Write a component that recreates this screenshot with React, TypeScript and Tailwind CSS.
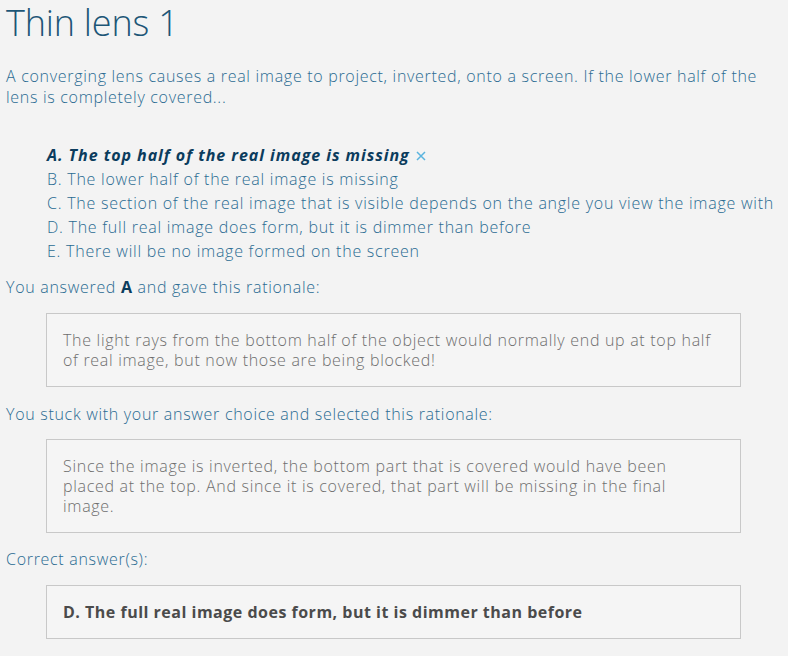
import React from "react";

const font = { fontFamily: '"Open Sans", "Noto Sans", sans-serif' };

export default function App() {
  const options = [
    "B. The lower half of the real image is missing",
    "C. The section of the real image that is visible depends on the angle you view the image with",
    "D. The full real image does form, but it is dimmer than before",
    "E. There will be no image formed on the screen",
  ];
  return (
    <div className="min-h-screen bg-[#f3f3f3] pl-[6px] pr-[6px] font-light text-[#2a6b92]" style={font}>
      <h1 className="text-[36px] leading-[46px] text-[#1d5677] font-light tracking-[-0.2px]">Thin lens 1</h1>
      <p className="mt-[20px] text-[16px] leading-[21px] tracking-[0.7px]">
        A converging lens causes a real image to project, inverted, onto a screen. If the lower half of the lens is completely covered...
      </p>
      <ul className="mt-[35px] ml-[41px] text-[16px] leading-[24px] tracking-[0.75px]">
        <li className="flex items-center">
          <span className="font-bold italic text-[#0b3c5d] tracking-[0.95px]">A. The top half of the real image is missing</span>
          <svg className="ml-[6px] mt-[2px]" width="10" height="10" viewBox="0 0 10 10" fill="none" stroke="#5ab4df" strokeWidth="1.5">
            <path d="M1 1 L9 9 M9 1 L1 9" />
          </svg>
        </li>
        {options.map((o) => (
          <li key={o} className="whitespace-nowrap">{o}</li>
        ))}
      </ul>
      <p className="mt-[12px] text-[16px] leading-[24px] tracking-[0.7px]">
        You answered <span className="font-bold text-[#0b3c5d]">A</span> and gave this rationale:
      </p>
      <div className="mt-[14px] ml-[40px] w-[695px] border border-[#c8c8c8] bg-[#f5f5f5] pl-[16px] pr-[22px] pt-[16px] pb-[16px] text-[16px] leading-[20px] text-[#6e6e6e] tracking-[0.7px]">
        The light rays from the bottom half of the object would normally end up at top half of real image, but now those are being blocked!
      </div>
      <p className="mt-[15px] text-[16px] leading-[24px] tracking-[0.7px]">
        You stuck with your answer choice and selected this rationale:
      </p>
      <div className="mt-[13px] ml-[40px] w-[695px] border border-[#c8c8c8] bg-[#f5f5f5] pl-[16px] pr-[22px] pt-[16px] pb-[16px] text-[16px] leading-[20px] text-[#6e6e6e] tracking-[0.7px]">
        Since the image is inverted, the bottom part that is covered would have been placed at the top. And since it is covered, that part will be missing in the final image.
      </div>
      <p className="mt-[14px] text-[16px] leading-[24px] tracking-[0.7px]">Correct answer(s):</p>
      <div className="mt-[14px] ml-[40px] w-[695px] border border-[#c8c8c8] bg-[#f5f5f5] px-[16px] py-[16px] text-[16px] leading-[20px] text-[#4b4b4b] font-bold tracking-[0.5px]">
        D. The full real image does form, but it is dimmer than before
      </div>
    </div>
  );
}
